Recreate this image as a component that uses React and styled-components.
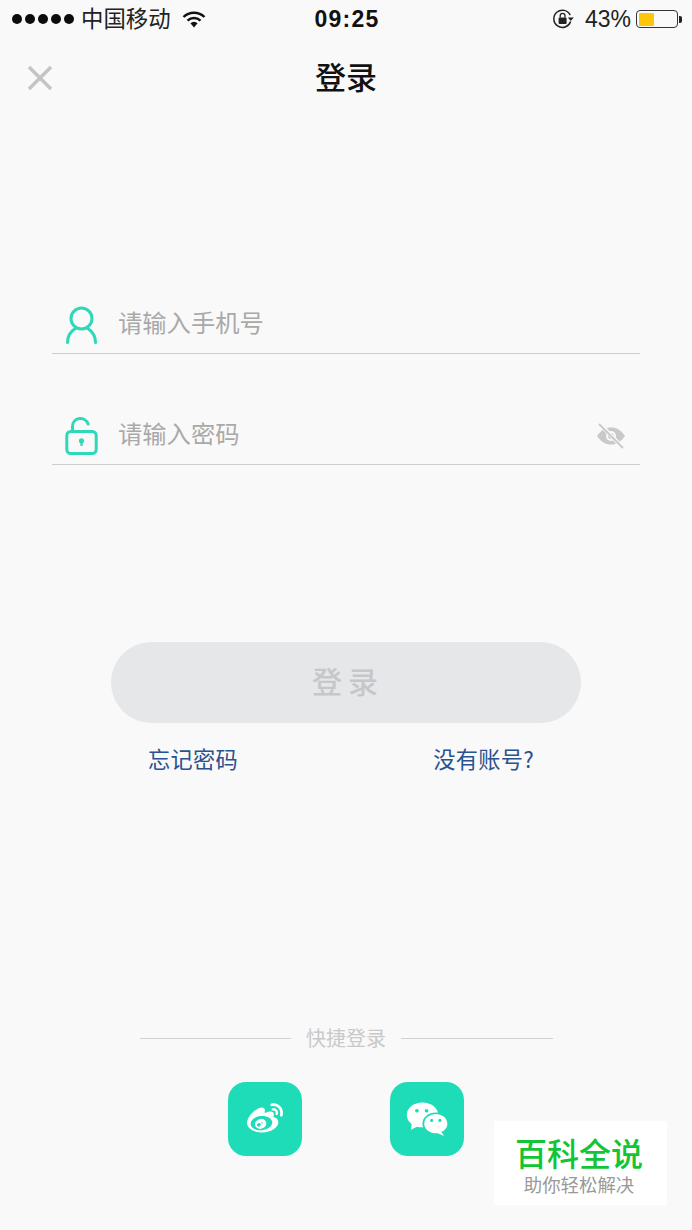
import React from "react";
import styled, { createGlobalStyle } from "styled-components";
import { FaWeibo } from "react-icons/fa";

const GlobalStyle = createGlobalStyle`
  html, body {
    margin: 0;
    padding: 0;
    background: #f9f9f9;
  }
  * {
    box-sizing: border-box;
  }
`;

const FONT = `"Noto Sans CJK SC", "Liberation Sans", sans-serif`;

const App = () => {
  return (
    <Page>
      <GlobalStyle />
      <StatusBar>
        <StatusLeft>
          <Signal>
            {[0, 1, 2, 3, 4].map((i) => (
              <i key={i} />
            ))}
          </Signal>
          <Carrier>中国移动</Carrier>
          <WifiIcon />
        </StatusLeft>
        <Clock>09:25</Clock>
        <StatusRight>
          <RotationLock />
          <Percent>43%</Percent>
          <Battery>
            <BatteryFill $level={43} />
          </Battery>
          <BatteryCap />
        </StatusRight>
      </StatusBar>

      <NavBar>
        <CloseIcon />
        <Title>登录</Title>
        <span />
      </NavBar>

      <Form>
        <Field>
          <UserIcon />
          <Placeholder>请输入手机号</Placeholder>
        </Field>
        <Field>
          <LockIcon />
          <Placeholder>请输入密码</Placeholder>
          <EyeOffIcon />
        </Field>
      </Form>

      <SubmitButton>登录</SubmitButton>
      <Links>
        <LinkText>忘记密码</LinkText>
        <LinkText>没有账号?</LinkText>
      </Links>

      <QuickLogin>
        <Divider>
          <span>快捷登录</span>
        </Divider>
        <SocialRow>
          <SocialButton>
            <FaWeibo size={36} color="#fff" />
          </SocialButton>
          <SocialButton>
            <WechatIcon />
          </SocialButton>
        </SocialRow>
      </QuickLogin>

      <Watermark>
        <strong>百科全说</strong>
        <small>助你轻松解决</small>
      </Watermark>
    </Page>
  );
};

export default App;

const WifiIcon = () => (
  <svg width="24" height="17" viewBox="0 0 24 17" style={{ marginLeft: 11 }}>
    <path d="M1.5 6a15 15 0 0 1 21 0" fill="none" stroke="#111" strokeWidth="2.4" />
    <path d="M5.5 9.6a9.5 9.5 0 0 1 13 0" fill="none" stroke="#111" strokeWidth="2.4" />
    <path d="M8.4 12.3a5 5 0 0 1 7.2 0L12 16.4z" fill="#111" />
  </svg>
);

const RotationLock = () => (
  <svg width="23" height="22" viewBox="0 0 23 22" style={{ marginRight: 10 }}>
    <path d="M18.6 13.5a8.6 8.6 0 1 1-.4-6.4" fill="none" stroke="#222" strokeWidth="1.5" />
    <path d="M15.8 9.6h6l-3 3.4z" fill="#222" />
    <rect x="6.6" y="9.4" width="8" height="6.6" rx="1" fill="#222" />
    <path d="M8.2 9.6V7.8a2.4 2.4 0 0 1 4.8 0v1.8" fill="none" stroke="#222" strokeWidth="1.3" />
  </svg>
);

const CloseIcon = () => (
  <svg width="28" height="28" viewBox="0 0 28 28">
    <path d="M3 3l22 22M25 3L3 25" fill="none" stroke="#c4c4c4" strokeWidth="3.4" />
  </svg>
);

const UserIcon = () => (
  <FieldIcon width="32" height="38" viewBox="0 0 32 38">
    <circle cx="16" cy="12.5" r="10.5" fill="none" stroke="#2ed8b8" strokeWidth="3" />
    <path d="M2 36.5c0-7 4-11.6 8.4-14.4M30 36.5c0-7-4-11.6-8.4-14.4" fill="none" stroke="#2ed8b8" strokeWidth="3" strokeLinecap="round" />
  </FieldIcon>
);

const LockIcon = () => (
  <FieldIcon width="33" height="38" viewBox="0 0 33 38">
    <rect x="1.8" y="14.5" width="29.4" height="22" rx="4" fill="none" stroke="#2ed8b8" strokeWidth="3" />
    <path d="M7.5 14V9.5a8 8 0 0 1 15.6-2.5" fill="none" stroke="#2ed8b8" strokeWidth="3" strokeLinecap="round" />
    <circle cx="16.5" cy="23.8" r="2.6" fill="#2ed8b8" />
    <rect x="15.4" y="24" width="2.2" height="5" fill="#2ed8b8" />
  </FieldIcon>
);

const EyeOffIcon = () => (
  <EyeSvg width="30" height="26" viewBox="0 0 30 26">
    <path d="M1 13c4-6 8.500-8.500 14-8.500S25 7 29 13c-4 6-8.500 8.500-14 8.500S5 19 1 13z" fill="#c9c9c9" />
    <circle cx="15" cy="13" r="5" fill="#f9f9f9" />
    <circle cx="15" cy="13" r="3" fill="#c9c9c9" />
    <path d="M4 1l23 24" stroke="#f9f9f9" strokeWidth="4" />
    <path d="M3 1l24 24" stroke="#c9c9c9" strokeWidth="1.8" />
  </EyeSvg>
);

const WechatIcon = () => (
  <svg width="43" height="35" viewBox="0 0 46 38">
    <ellipse cx="17.500" cy="14" rx="17" ry="13.500" fill="#fff" />
    <path d="M6 22l-1 8 8-4z" fill="#fff" />
    <circle cx="11.500" cy="9.500" r="2" fill="#1fdcb8" />
    <circle cx="22" cy="9.500" r="2" fill="#1fdcb8" />
    <ellipse cx="32" cy="23.500" rx="14.500" ry="12" fill="#1fdcb8" />
    <ellipse cx="32" cy="23.500" rx="12.500" ry="10.500" fill="#fff" />
    <path d="M37 31l4 6-7-3z" fill="#fff" />
    <circle cx="27.500" cy="20" r="1.700" fill="#1fdcb8" />
    <circle cx="36.500" cy="20" r="1.700" fill="#1fdcb8" />
  </svg>
);

const Page = styled.div`
  position: relative;
  display: flex;
  flex-direction: column;
  width: 692px;
  height: 1230px;
  overflow: hidden;
  background: #f9f9f9;
  font-family: ${FONT};
`;

const StatusBar = styled.div`
  display: grid;
  grid-template-columns: 1fr auto 1fr;
  align-items: center;
  height: 38px;
  padding: 0 10px 0 12px;
  color: #111;
`;

const StatusLeft = styled.div`
  display: flex;
  align-items: center;
`;

const Signal = styled.div`
  display: flex;
  gap: 3px;

  i {
    width: 10px;
    height: 10px;
    border-radius: 50%;
    background: #0c0c0c;
  }
`;

const Carrier = styled.span`
  margin-left: 7px;
  padding-bottom: 4px;
  font-size: 22.4px;
  line-height: 1;
  color: #222;
`;

const Clock = styled.span`
  font-family: "Liberation Sans", sans-serif;
  font-size: 23px;
  font-weight: 700;
  letter-spacing: 1.2px;
`;

const StatusRight = styled.div`
  display: flex;
  align-items: center;
  justify-content: flex-end;
`;

const Percent = styled.span`
  margin-right: 5px;
  font-family: "Liberation Sans", sans-serif;
  font-size: 23px;
  color: #222;
`;

const Battery = styled.div`
  width: 42px;
  height: 18px;
  padding: 1.500px;
  border: 1px solid #333;
  border-radius: 4px;
`;

const BatteryFill = styled.div`
  width: ${(props) => props.$level}%;
  height: 100%;
  border-radius: 1px;
  background: #fdc60a;
`;

const BatteryCap = styled.div`
  width: 3px;
  height: 7px;
  margin-left: 1px;
  border-radius: 0 2px 2px 0;
  background: #222;
`;

const NavBar = styled.div`
  display: grid;
  grid-template-columns: 1fr auto 1fr;
  align-items: center;
  height: 80px;
  padding: 0 26px;
`;

const Title = styled.h1`
  margin: 0 0 6px;
  font-size: 31px;
  font-weight: 500;
  line-height: 1;
  color: #111;
`;

const Form = styled.div`
  display: flex;
  flex-direction: column;
  gap: 53px;
  margin: 178px 52px 0;
`;

const Field = styled.div`
  display: flex;
  align-items: center;
  height: 58px;
  padding: 0 14px 0 13px;
  border-bottom: 1px solid #cdcdcd;
`;

const FieldIcon = styled.svg`
  flex: none;
  width: 33px;
`;

const Placeholder = styled.span`
  flex: 1;
  margin: 0 0 4px 20px;
  font-size: 24.3px;
  line-height: 1;
  color: #a9a9a9;
`;

const EyeSvg = styled.svg`
  flex: none;
`;

const SubmitButton = styled.button`
  align-self: center;
  width: 470px;
  height: 81px;
  margin-top: 177px;
  padding: 0 2px 5px 6px;
  border: 0;
  border-radius: 41px;
  background: #e6e7e9;
  font-family: ${FONT};
  font-size: 30px;
  font-weight: 500;
  letter-spacing: 6px;
  color: #c5c7c9;
`;

const Links = styled.div`
  display: flex;
  justify-content: space-between;
  margin-top: 19px;
  padding: 0 158px 0 148px;
`;

const LinkText = styled.span`
  font-size: 22.2px;
  line-height: 32px;
  letter-spacing: 0.3px;
  color: #2a5190;
`;

const QuickLogin = styled.div`
  display: flex;
  flex-direction: column;
  align-items: center;
  margin-top: 249px;
`;

const Divider = styled.div`
  display: flex;
  align-items: center;
  width: 413px;
  font-size: 20px;
  line-height: 30px;
  color: #c9c9c9;

  span {
    padding: 0 15px;
  }

  &::before,
  &::after {
    content: "";
    flex: 1;
    height: 1px;
    background: #d2d2d2;
  }
`;

const SocialRow = styled.div`
  display: flex;
  gap: 88px;
  margin-top: 29px;
`;

const SocialButton = styled.div`
  display: flex;
  align-items: center;
  justify-content: center;
  width: 74px;
  height: 74px;
  border-radius: 18px;
  background: #1fdcb8;
`;

const Watermark = styled.div`
  position: absolute;
  left: 494px;
  top: 1121px;
  display: flex;
  flex-direction: column;
  align-items: center;
  gap: 2px;
  width: 173px;
  height: 84px;
  padding: 16px 3px 0 0;
  background: #fff;
  font-family: "Liberation Sans", "Noto Sans CJK SC", sans-serif;

  strong {
    font-size: 32px;
    font-weight: 500;
    line-height: 36px;
    color: #12c535;
  }

  small {
    font-size: 18.4px;
    line-height: 22px;
    color: #999;
  }
`;
